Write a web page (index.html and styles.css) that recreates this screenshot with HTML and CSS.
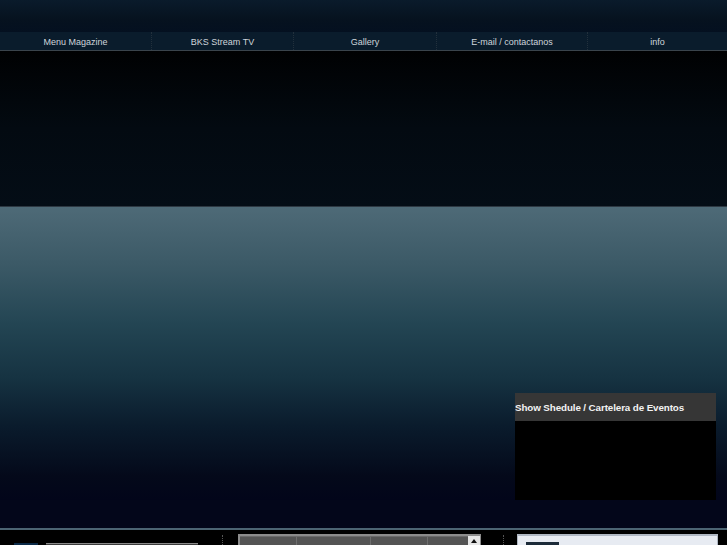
FILE: index.html
```html
<!DOCTYPE html>
<html>
<head>
<meta charset="utf-8">
<link rel="stylesheet" href="styles.css">
</head>
<body>
<div class="page">
  <div class="header"></div>
  <nav class="nav">
    <a class="nav-item w1">Menu Magazine</a>
    <a class="nav-item w2 sep">BKS Stream TV</a>
    <a class="nav-item w3 sep">Gallery</a>
    <a class="nav-item w4 sep">E-mail / contactanos</a>
    <a class="nav-item w5 sep">info</a>
  </nav>
  <div class="band"></div>
  <div class="stage">
    <div class="events">
      <div class="events-title">Show Shedule / Cartelera de Eventos</div>
      <div class="events-body"></div>
    </div>
  </div>
  <div class="strip"></div>
  <div class="bottom">
    <div class="col-a">
      <div class="thumb"></div>
      <div class="input-bar"></div>
    </div>
    <div class="dots"></div>
    <div class="col-b">
      <div class="grid-panel">
        <div class="cell c1"></div>
        <div class="cell c2"></div>
        <div class="cell c3"></div>
        <div class="cell c4"></div>
        <div class="scroll-btn"><span class="arrow"></span></div>
      </div>
    </div>
    <div class="dots"></div>
    <div class="col-c">
      <div class="light-panel">
        <div class="dark-box"></div>
        <div class="gray-text"></div>
      </div>
    </div>
  </div>
</div>
</body>
</html>
```

FILE: styles.css
```css
html, body {
  margin: 0;
  padding: 0;
  background: #000;
  overflow: hidden;
}
.page {
  width: 727px;
  font-family: "Liberation Sans", Arial, sans-serif;
}
.header {
  height: 32px;
  background: linear-gradient(#0a1b2b, #06121f 60%, #041020);
}
.nav {
  display: flex;
  height: 18px;
  background: #0a1c2c;
  border-bottom: 1px solid #3a444c;
}
.nav-item {
  display: flex;
  align-items: center;
  justify-content: center;
  font-size: 9px;
  color: #cfd5db;
  text-decoration: none;
  box-sizing: border-box;
  padding-top: 1px;
}
.nav-item.sep {
  border-left: 1px dotted #22303c;
}
.w1 { width: 151px; }
.w2 { width: 142px; }
.w3 { width: 143px; }
.w4 { width: 151px; }
.w5 { width: 140px; }
.band {
  height: 155px;
  background: linear-gradient(#000102 0%, #010407 15%, #030a11 50%, #040d16 100%);
  border-bottom: 1px solid #2d3842;
}
.stage {
  height: 293px;
  background: linear-gradient(#4e6a77 0%, #3b5966 20%, #234553 40%, #163342 58%, #0a1b2c 75%, #04091a 92%, #02051a 100%);
  display: flex;
  flex-direction: column;
  justify-content: flex-end;
  align-items: flex-end;
  padding-right: 11px;
}
.events {
  width: 201px;
  height: 107px;
  display: flex;
  flex-direction: column;
}
.events-title {
  height: 28px;
  background: #363636;
  color: #f2f2f2;
  font-size: 9.8px;
  font-weight: bold;
  display: flex;
  align-items: center;
  letter-spacing: -0.1px;
}
.events-body {
  flex: 1;
  background: #000;
}
.strip {
  height: 28px;
  background: #03061a;
  border-bottom: 2px solid #4c6473;
}
.bottom {
  display: flex;
  height: 40px;
  background: #000;
}
.col-a {
  width: 222px;
  display: flex;
  align-items: flex-start;
  padding-top: 13px;
  padding-left: 14px;
  gap: 8px;
  box-sizing: border-box;
}
.thumb {
  width: 24px;
  height: 10px;
  background: #0b2a48;
}
.input-bar {
  width: 152px;
  height: 10px;
  background: #3b3b3b;
  border-top: 1px solid #8a8a8a;
  box-sizing: border-box;
}
.dots {
  width: 1px;
  margin-top: 5px;
  height: 30px;
  border-left: 1px dotted #555;
}
.col-b {
  width: 279px;
  padding-top: 4px;
  padding-left: 14px;
  box-sizing: border-box;
}
.grid-panel {
  width: 243px;
  height: 20px;
  border: 2px solid #8c8c8c;
  border-right-width: 1px;
  background: #545454;
  display: flex;
  box-sizing: border-box;
}
.cell {
  height: 100%;
  border-right: 1px solid #6e6e6e;
  box-sizing: border-box;
  border-top: 1px solid #6a6a6a;
}
.c1 { width: 57px; }
.c2 { width: 74px; }
.c3 { width: 57px; }
.c4 { width: 40px; border-right: none; }
.scroll-btn {
  width: 12px;
  height: 100%;
  background: #e6e6e6;
  display: flex;
  justify-content: center;
  padding-top: 3px;
  box-sizing: border-box;
}
.arrow {
  width: 0;
  height: 0;
  border-left: 3px solid transparent;
  border-right: 3px solid transparent;
  border-bottom: 4px solid #111;
}
.col-c {
  flex: 1;
  padding-top: 4px;
  padding-left: 12px;
  box-sizing: border-box;
}
.light-panel {
  width: 201px;
  height: 20px;
  background: #e7ebf2;
  border: 1px solid #b0b8c4;
  border-top-width: 2px;
  box-sizing: border-box;
  display: flex;
  align-items: flex-start;
  padding-left: 8px;
  padding-top: 6px;
  gap: 8px;
}
.dark-box {
  width: 33px;
  height: 10px;
  background: #1c2b39;
}
.gray-text {
  width: 60px;
  height: 3px;
  margin-top: 3px;
  border-top: 2px dotted #b6bcc6;
}
```
